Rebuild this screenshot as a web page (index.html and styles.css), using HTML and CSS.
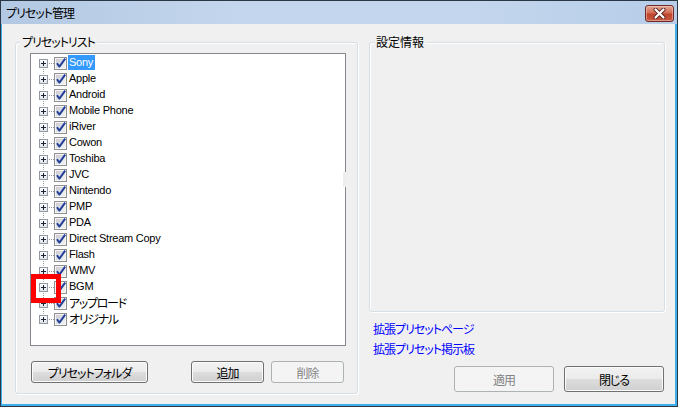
FILE: index.html
```html
<!DOCTYPE html>
<html lang="ja">
<head>
<meta charset="utf-8">
<title>プリセット管理</title>
<link rel="stylesheet" href="styles.css">
</head>
<body>
<svg class="defs" width="0" height="0" aria-hidden="true">
  <defs>
    <linearGradient id="cbfill" x1="0" y1="0" x2="1" y2="1">
      <stop offset="0" stop-color="#c9ccd1"/>
      <stop offset="1" stop-color="#f3f3f3"/>
    </linearGradient>
    <linearGradient id="exfill" x1="0" y1="0" x2="0" y2="1">
      <stop offset="0" stop-color="#ffffff"/>
      <stop offset="1" stop-color="#dfe3e8"/>
    </linearGradient>
    <symbol id="box" viewBox="0 0 23 16">
      <rect x="8.5" y="4.5" width="8" height="8" fill="url(#exfill)" stroke="#8f9aa5"/>
      <rect x="10" y="8" width="5" height="1" fill="#1a2633"/>
      <rect x="12" y="6" width="1" height="5" fill="#1a2633"/>
      <rect x="18" y="8" width="1" height="1" fill="#9a9a9a"/>
      <rect x="20" y="8" width="1" height="1" fill="#9a9a9a"/>
      <rect x="22" y="8" width="1" height="1" fill="#9a9a9a"/>
    </symbol>
    <symbol id="up" viewBox="0 0 23 16">
      <rect x="12" y="0" width="1" height="1" fill="#9a9a9a"/>
      <rect x="12" y="2" width="1" height="1" fill="#9a9a9a"/>
    </symbol>
    <symbol id="down" viewBox="0 0 23 16">
      <rect x="12" y="14" width="1" height="1" fill="#9a9a9a"/>
    </symbol>
    <symbol id="cb" viewBox="0 0 13 13">
      <rect x="0.5" y="0.5" width="12" height="12" fill="#f6f6f6" stroke="#8e8f8f"/>
      <rect x="2" y="2" width="9" height="9" fill="url(#cbfill)"/>
      <path d="M3 6.2 L5.4 9.6 L11.2 1.6" fill="none" stroke="#1f3d99" stroke-width="1.9" stroke-linejoin="round"/>
    </symbol>
  </defs>
</svg>

<div class="window">
  <div class="titlebar">
    <span class="title">プリセット管理</span>
    <span class="close">
      <svg width="13" height="11" viewBox="0 0 13 11">
        <path d="M2.5 1.5 L10.5 9.5 M10.5 1.5 L2.5 9.5" stroke="#5b2320" stroke-width="4" stroke-linecap="round"/>
        <path d="M2.5 1.5 L10.5 9.5 M10.5 1.5 L2.5 9.5" stroke="#ffffff" stroke-width="2.2" stroke-linecap="round"/>
      </svg>
    </span>
  </div>

  <div class="client">
    <div class="group left">
      <span class="legend">プリセットリスト</span>
      <div class="group-body">
        <div class="tree">
          <div class="row"><svg class="tw"><use href="#down"/><use href="#box"/></svg><svg class="cb"><use href="#cb"/></svg><span class="lbl sel">Sony</span></div>
          <div class="row"><svg class="tw"><use href="#up"/><use href="#down"/><use href="#box"/></svg><svg class="cb"><use href="#cb"/></svg><span class="lbl">Apple</span></div>
          <div class="row"><svg class="tw"><use href="#up"/><use href="#down"/><use href="#box"/></svg><svg class="cb"><use href="#cb"/></svg><span class="lbl">Android</span></div>
          <div class="row"><svg class="tw"><use href="#up"/><use href="#down"/><use href="#box"/></svg><svg class="cb"><use href="#cb"/></svg><span class="lbl">Mobile Phone</span></div>
          <div class="row"><svg class="tw"><use href="#up"/><use href="#down"/><use href="#box"/></svg><svg class="cb"><use href="#cb"/></svg><span class="lbl">iRiver</span></div>
          <div class="row"><svg class="tw"><use href="#up"/><use href="#down"/><use href="#box"/></svg><svg class="cb"><use href="#cb"/></svg><span class="lbl">Cowon</span></div>
          <div class="row"><svg class="tw"><use href="#up"/><use href="#down"/><use href="#box"/></svg><svg class="cb"><use href="#cb"/></svg><span class="lbl">Toshiba</span></div>
          <div class="row"><svg class="tw"><use href="#up"/><use href="#down"/><use href="#box"/></svg><svg class="cb"><use href="#cb"/></svg><span class="lbl">JVC</span></div>
          <div class="row"><svg class="tw"><use href="#up"/><use href="#down"/><use href="#box"/></svg><svg class="cb"><use href="#cb"/></svg><span class="lbl">Nintendo</span></div>
          <div class="row"><svg class="tw"><use href="#up"/><use href="#down"/><use href="#box"/></svg><svg class="cb"><use href="#cb"/></svg><span class="lbl">PMP</span></div>
          <div class="row"><svg class="tw"><use href="#up"/><use href="#down"/><use href="#box"/></svg><svg class="cb"><use href="#cb"/></svg><span class="lbl">PDA</span></div>
          <div class="row"><svg class="tw"><use href="#up"/><use href="#down"/><use href="#box"/></svg><svg class="cb"><use href="#cb"/></svg><span class="lbl">Direct Stream Copy</span></div>
          <div class="row"><svg class="tw"><use href="#up"/><use href="#down"/><use href="#box"/></svg><svg class="cb"><use href="#cb"/></svg><span class="lbl">Flash</span></div>
          <div class="row"><svg class="tw"><use href="#up"/><use href="#down"/><use href="#box"/></svg><svg class="cb"><use href="#cb"/></svg><span class="lbl">WMV</span></div>
          <div class="row"><svg class="tw"><use href="#up"/><use href="#down"/><use href="#box"/></svg><svg class="cb"><use href="#cb"/></svg><span class="lbl">BGM</span></div>
          <div class="row"><svg class="tw"><use href="#up"/><use href="#down"/><use href="#box"/></svg><svg class="cb"><use href="#cb"/></svg><span class="lbl jp">アップロード</span></div>
          <div class="row"><svg class="tw"><use href="#up"/><use href="#box"/></svg><svg class="cb"><use href="#cb"/></svg><span class="lbl jp">オリジナル</span></div>
        </div>
        <div class="btnrow">
          <span class="btn folder">プリセットフォルダ</span>
          <span class="btn small">追加</span>
          <span class="btn small dis">削除</span>
        </div>
      </div>
    </div>

    <div class="right">
      <div class="group info">
        <span class="legend">設定情報</span>
      </div>
      <div class="links">
        <a class="link" href="#">拡張プリセットページ</a>
        <a class="link" href="#">拡張プリセット掲示板</a>
      </div>
      <div class="btnrow-r">
        <span class="btn big dis">適用</span>
        <span class="btn big">閉じる</span>
      </div>
    </div>
  </div>

  <span class="notch"></span>
  <span class="mark"></span>
</div>
</body>
</html>
```

FILE: styles.css
```css
html, body {
  margin: 0;
  padding: 0;
  background: #ffffff;
}

body {
  font-family: "Noto Sans CJK JP", sans-serif;
  font-size: 12px;
  color: #000;
}

.defs {
  position: absolute;
  width: 0;
  height: 0;
}

.window {
  position: relative;
  width: 678px;
  height: 407px;
  box-sizing: border-box;
  border: 1px solid #2a3744;
  display: flex;
  flex-direction: column;
  overflow: hidden;
}

.titlebar {
  height: 23px;
  flex: none;
  display: flex;
  align-items: flex-start;
  background: linear-gradient(to right, #b3c8e2, #c3d6ed 35%, #c3d6ed 70%, #b7cde8);
}

.title {
  flex: 1;
  font-size: 12px;
  line-height: 14px;
  margin: 5px 0 0 5px;
  font-feature-settings: "palt";
  letter-spacing: -1px;
  color: #000;
}

.close {
  width: 29px;
  height: 17px;
  box-sizing: border-box;
  margin: 4px 3px 0 0;
  border: 1px solid #6b2b28;
  border-radius: 3px;
  background: linear-gradient(#e3a595, #d26d56 45%, #c0442c 55%, #c85a42);
  box-shadow: inset 0 0 0 1px rgba(255, 220, 210, 0.45);
  display: flex;
  align-items: center;
  justify-content: center;
}

.close svg {
  display: block;
}

.client {
  flex: 1;
  background: #f0f0f0;
  border-style: solid;
  border-color: #3faeea;
  border-width: 0 2px 2px 1px;
  display: flex;
  align-items: flex-start;
  gap: 11px;
  padding: 18px 10px 0 13px;
}

.group {
  box-sizing: border-box;
  border: 1px solid #d5dfe5;
  border-radius: 3px;
  box-shadow: 1px 1px 0 #ffffff, inset 1px 1px 0 #ffffff;
  display: flex;
  flex-direction: column;
}

.legend {
  align-self: flex-start;
  margin: -8px 0 0 4px;
  padding: 0 2px;
  height: 14px;
  line-height: 14px;
  font-size: 12px;
  background: #f0f0f0;
  font-feature-settings: "palt";
  letter-spacing: -1px;
  white-space: nowrap;
}

.info .legend {
  letter-spacing: 0;
}

.left {
  width: 343px;
}

.group-body {
  padding: 0 11px 10px 14px;
}

.tree {
  margin-top: 4px;
  height: 293px;
  box-sizing: border-box;
  border: 1px solid #828790;
  background: #ffffff;
  padding-top: 1px;
}

.row {
  display: flex;
  align-items: flex-start;
  height: 16px;
}

.tw {
  width: 23px;
  height: 16px;
  flex: none;
  display: block;
}

.cb {
  width: 13px;
  height: 13px;
  flex: none;
  display: block;
  margin-top: 2px;
}

.lbl {
  margin-left: 1px;
  padding: 0 2px 0 1px;
  height: 15px;
  line-height: 15px;
  font-family: "Liberation Sans", "Noto Sans CJK JP", sans-serif;
  font-size: 11px;
  letter-spacing: -0.25px;
  white-space: nowrap;
  color: #000;
}

.lbl.jp {
  font-family: "Noto Sans CJK JP", sans-serif;
  font-size: 12px;
  letter-spacing: -1.3px;
  font-feature-settings: "palt";
}

.lbl.sel {
  background: #3399ff;
  color: #ffffff;
}

.btnrow {
  display: flex;
  gap: 7px;
  margin: 15px 2px 0 1px;
}

.btn {
  box-sizing: border-box;
  height: 22px;
  border: 1px solid #707070;
  border-radius: 3px;
  background: linear-gradient(#f2f2f2 0%, #ebebeb 48%, #dddddd 52%, #cfcfcf 100%);
  box-shadow: inset 0 0 0 1px #fbfbfb;
  display: flex;
  align-items: center;
  justify-content: center;
  font-size: 12px;
  font-feature-settings: "palt";
  letter-spacing: -1px;
  color: #000;
  white-space: nowrap;
}

.btn.dis {
  border-color: #adb2b5;
  background: #f4f4f4;
  box-shadow: none;
  color: #838383;
}

.folder {
  width: 117px;
  margin-right: auto;
}

.small {
  width: 73px;
}

.right {
  width: 296px;
  display: flex;
  flex-direction: column;
}

.info {
  height: 270px;
}

.links {
  margin: 7px 0 0 4px;
  display: flex;
  flex-direction: column;
  align-items: flex-start;
}

.link {
  display: block;
  line-height: 20px;
  height: 20px;
  font-size: 12px;
  color: #0000ff;
  text-decoration: none;
  font-feature-settings: "palt";
  letter-spacing: -1px;
}

.btnrow-r {
  display: flex;
  justify-content: flex-end;
  gap: 10px;
  margin: 7px 1px 0 0;
}

.big {
  width: 100px;
  height: 26px;
}

.notch {
  position: absolute;
  left: 342px;
  top: 171px;
  width: 3px;
  height: 15px;
  background: #eeeeee;
}

.mark {
  position: absolute;
  left: 30px;
  top: 273px;
  width: 30px;
  height: 29px;
  box-sizing: border-box;
  border: 5px solid #ff0000;
}
```
